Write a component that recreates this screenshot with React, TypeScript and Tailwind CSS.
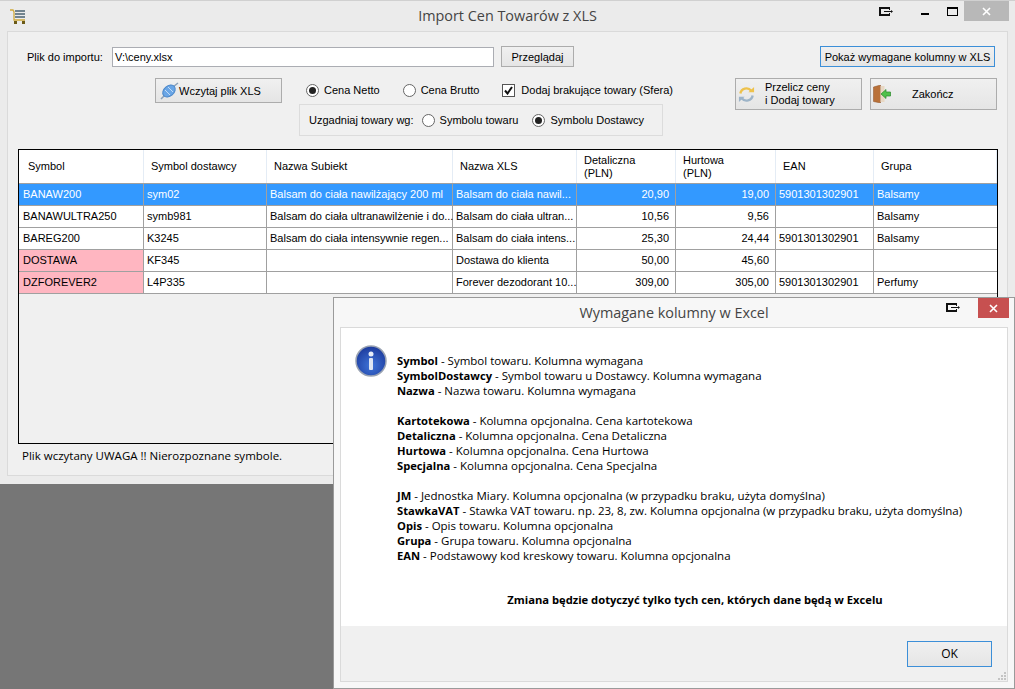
const rows = [
  { symbol: 'BANAW200', dost: 'sym02', subiekt: 'Balsam do ciała nawilżający 200 ml', xls: 'Balsam do ciała nawil...', det: '20,90', hurt: '19,00', ean: '5901301302901', grupa: 'Balsamy', selected: true },
  { symbol: 'BANAWULTRA250', dost: 'symb981', subiekt: 'Balsam do ciała ultranawilżenie i do...', xls: 'Balsam do ciała ultran...', det: '10,56', hurt: '9,56', ean: '', grupa: 'Balsamy' },
  { symbol: 'BAREG200', dost: 'K3245', subiekt: 'Balsam do ciała intensywnie regen...', xls: 'Balsam do ciała intens...', det: '25,30', hurt: '24,44', ean: '5901301302901', grupa: 'Balsamy' },
  { symbol: 'DOSTAWA', dost: 'KF345', subiekt: '', xls: 'Dostawa do klienta', det: '50,00', hurt: '45,60', ean: '', grupa: '', missing: true },
  { symbol: 'DZFOREVER2', dost: 'L4P335', subiekt: '', xls: 'Forever dezodorant 10...', det: '309,00', hurt: '305,00', ean: '5901301302901', grupa: 'Perfumy', missing: true },
]

const cols = 'grid grid-cols-[125px_123px_186px_124px_99px_100px_98px_123px]'

function Radio({ checked, label }: { checked?: boolean; label: string }) {
  return (
    <label className="flex items-center gap-[5px] whitespace-nowrap">
      <span className="w-[13px] h-[13px] rounded-full border border-[#666] bg-white flex items-center justify-center">
        {checked && <span className="w-[7px] h-[7px] rounded-full bg-[#222]" />}
      </span>
      {label}
    </label>
  )
}

function Btn({ className, children }: { className: string; children: React.ReactNode }) {
  return (
    <button className={`border border-[#acacac] bg-gradient-to-b from-[#f0f0f0] to-[#e5e5e5] flex items-center ${className}`}>
      {children}
    </button>
  )
}

function PinIcon() {
  return (
    <svg width="14" height="9" viewBox="0 0 14 9">
      <path d="M0 0h11v3h-1V2H2v5h8V6h1v3H0z" fill="#111" />
      <path d="M5 4h7v1H5z" fill="#111" />
      <path d="M12 3l2 1.500-2 1.500z" fill="#111" />
    </svg>
  )
}

function XlsIcon() {
  return (
    <svg width="20" height="18" viewBox="0 0 20 18">
      <path d="M2 17l4-4M14 5l5-4" stroke="#8aa0b8" strokeWidth="1.500" />
      <ellipse cx="10" cy="9" rx="5" ry="7" transform="rotate(50 10 9)" fill="#6aa6e6" stroke="#4a86c8" />
      <path d="M6 8l5 5M9 5l5 5" stroke="#c3dcf6" />
    </svg>
  )
}

function RefreshIcon() {
  return (
    <svg width="17" height="17" viewBox="0 0 18 18" fill="none" strokeWidth="2.500">
      <path d="M2.500 8a6.500 6.500 0 0 1 11.500-3" stroke="#eec24c" />
      <path d="M11 6.500h6V1z" fill="#eec24c" />
      <path d="M15.500 10a6.500 6.500 0 0 1-11.500 3" stroke="#9db4c8" />
      <path d="M7 11.500H1V17z" fill="#9db4c8" />
    </svg>
  )
}

function DoorIcon() {
  return (
    <svg width="18" height="18" viewBox="0 0 18 18">
      <path d="M0.500 2l7-2v18l-7-1.500z" fill="#b9713a" stroke="#8a4f24" strokeWidth="0.500" />
      <path d="M7.500 1h4v16h-4z" fill="#e8d8c4" />
      <path d="M8 9l5-4.500V7h4.500v4H13v2.500z" fill="#4fc04a" stroke="#2a8a2a" strokeWidth="0.700" />
    </svg>
  )
}

function CartIcon() {
  return (
    <svg width="16" height="15" viewBox="0 0 16 15">
      <path d="M0 1h3l1 2v8h11" fill="none" stroke="#d0aa3c" strokeWidth="1.300" />
      <path d="M5 1h10v2H5zM5 4h10v2H5zM5 7h10v2H5z" fill="#71848f" />
      <rect x="4" y="12" width="3" height="3" fill="#6b5a16" />
      <rect x="12" y="12" width="3" height="3" fill="#6b5a16" />
    </svg>
  )
}

function CloseGlyph() {
  return (
    <svg width="9" height="9" viewBox="0 0 9 9">
      <path d="M1 1l7 7M8 1l-7 7" stroke="#fff" strokeWidth="1.600" />
    </svg>
  )
}

function InfoIcon() {
  return (
    <svg width="32" height="32" viewBox="0 0 32 32" className="shrink-0">
      <defs>
        <radialGradient id="infoBg" cx="50%" cy="65%" r="65%">
          <stop offset="0%" stopColor="#3f74d8" />
          <stop offset="100%" stopColor="#1c3a9c" />
        </radialGradient>
      </defs>
      <circle cx="16" cy="16" r="15" fill="url(#infoBg)" stroke="#9aa3b3" strokeWidth="1.500" />
      <circle cx="16" cy="9" r="2.500" fill="#e8eef8" />
      <rect x="14" y="13" width="4" height="12" rx="1" fill="#dfe6f2" />
    </svg>
  )
}

const dialogLines: [string, string][][] = [
  [
    ['Symbol', ' - Symbol towaru. Kolumna wymagana'],
    ['SymbolDostawcy', ' - Symbol towaru u Dostawcy. Kolumna wymagana'],
    ['Nazwa', ' - Nazwa towaru. Kolumna wymagana'],
  ],
  [
    ['Kartotekowa', ' - Kolumna opcjonalna. Cena kartotekowa'],
    ['Detaliczna', ' - Kolumna opcjonalna. Cena Detaliczna'],
    ['Hurtowa', ' - Kolumna opcjonalna. Cena Hurtowa'],
    ['Specjalna', ' - Kolumna opcjonalna. Cena Specjalna'],
  ],
  [
    ['JM', ' - Jednostka Miary. Kolumna opcjonalna (w przypadku braku, użyta domyślna)'],
    ['StawkaVAT', ' - Stawka VAT towaru. np. 23, 8, zw. Kolumna opcjonalna (w przypadku braku, użyta domyślna)'],
    ['Opis', ' - Opis towaru. Kolumna opcjonalna'],
    ['Grupa', ' - Grupa towaru. Kolumna opcjonalna'],
    ['EAN', ' - Podstawowy kod kreskowy towaru. Kolumna opcjonalna'],
  ],
]

export default function App() {
  return (
    <div className="relative w-[1015px] h-[689px] overflow-hidden bg-[#767676] text-black font-['Liberation_Sans',sans-serif] text-[11px]">
      {/* main window */}
      <div className="h-[484px] bg-[#ebebeb] border-t border-[#d0d0d0] flex flex-col">
        <div className="h-[30px] shrink-0 flex items-center pl-[10px] relative">
          <CartIcon />
          <span className="absolute left-0 right-0 top-[5px] text-center font-['Open_Sans',sans-serif] text-[14.4px] leading-[20px] text-[#444]">Import Cen Towarów z XLS</span>
          <div className="ml-auto mr-[6px] -mt-[10px] flex items-center h-[20px]">
            <span className="mr-[28px] flex"><PinIcon /></span>
            <span className="w-[8px] h-[2px] bg-black mr-[18px] mt-[6px]" />
            <span className="w-[11px] h-[9px] border border-black border-t-2 mr-[6px]" />
            <span className="w-[45px] h-[20px] bg-[#b8b8b8] flex items-center justify-center"><CloseGlyph /></span>
          </div>
        </div>
        <div className="mx-[7px] h-[445px] bg-[#f0f0f0] border border-[#dadada] leading-[14px] px-[11px] relative">
          <div className="flex items-start h-[44px] pt-[15px]">
            <span className="w-[85px] ml-[8px] mt-[3px]">Plik do importu:</span>
            <div className="w-[382px] h-[20px] bg-white border border-[#abadb3] px-[2px] leading-[18px]">V:\ceny.xlsx</div>
            <Btn className="ml-[7px] -mt-[1px] w-[73px] h-[21px] justify-center">Przeglądaj</Btn>
            <Btn className="ml-auto mr-[1px] -mt-[1px] w-[175px] h-[21px] justify-center !border-[#3c8fd8]">Pokaż wymagane kolumny w XLS</Btn>
          </div>
          <div className="flex pt-[2px]">
            <div className="ml-[136px] w-[127px]">
              <Btn className="w-[127px] h-[25px] pl-[3px]">
                <XlsIcon />
                <span>Wczytaj plik XLS</span>
              </Btn>
            </div>
            <div className="ml-[24px] w-[429px] shrink-0">
              <div className="flex items-center h-[24px]">
                <Radio checked label="Cena Netto" />
                <span className="ml-[23px]"><Radio label="Cena Brutto" /></span>
                <label className="ml-[23px] flex items-center gap-[6px] whitespace-nowrap">
                  <span className="w-[13px] h-[13px] border border-[#555] bg-white flex items-center justify-center">
                    <svg width="9" height="9" viewBox="0 0 9 9"><path d="M1 4.500l2.500 3L8 1" fill="none" stroke="#111" strokeWidth="2" /></svg>
                  </span>
                  Dodaj brakujące towary (Sfera)
                </label>
              </div>
              <div className="mt-[2px] -ml-[7px] w-[364px] h-[32px] border border-[#dcdcdc] flex items-center pl-[9px] whitespace-nowrap">
                Uzgadniaj towary wg:
                <span className="ml-[8px]"><Radio label="Symbolu towaru" /></span>
                <span className="ml-[14px]"><Radio checked label="Symbolu Dostawcy" /></span>
              </div>
            </div>
            <div className="flex gap-[8px] shrink-0">
              <Btn className="w-[127px] h-[32px] pl-[2px] text-left">
                <RefreshIcon />
                <span className="ml-[10px] leading-[13px] whitespace-nowrap">Przelicz ceny<br />i Dodaj towary</span>
              </Btn>
              <Btn className="w-[127px] h-[32px] pl-[2px]">
                <DoorIcon />
                <span className="ml-[21px]">Zakończ</span>
              </Btn>
            </div>
          </div>
          {/* grid */}
          <div className="absolute left-[10px] top-[117px] w-[980px] h-[295px] border border-black bg-[#f0f0f0]">
            <div className={`${cols} h-[33px] bg-white`}>
              {['Symbol', 'Symbol dostawcy', 'Nazwa Subiekt', 'Nazwa XLS', 'Detaliczna\n(PLN)', 'Hurtowa\n(PLN)', 'EAN', 'Grupa'].map((h, i) => (
                <div key={h} className={`border-r border-[#e4ecf5] whitespace-pre-line flex items-center leading-[13px] ${i === 0 ? 'pl-[9px]' : 'pl-[7px]'}`}>{h}</div>
              ))}
            </div>
            {rows.map((r) => (
              <div key={r.symbol} className={`${cols} h-[22px] border-t border-[#a0a0a0] leading-[21px] ${r.selected ? 'bg-[#3399ff] text-white' : 'bg-white'}`}>
                <div className={`pl-[4px] border-r border-[#a0a0a0] whitespace-nowrap ${r.missing ? 'bg-[#ffb6c1]' : ''}`}>{r.symbol}</div>
                <div className="pl-[3px] border-r border-[#a0a0a0] whitespace-nowrap">{r.dost}</div>
                <div className="pl-[3px] border-r border-[#a0a0a0] whitespace-nowrap">{r.subiekt}</div>
                <div className="pl-[3px] border-r border-[#a0a0a0] whitespace-nowrap">{r.xls}</div>
                <div className="pr-[6px] border-r border-[#a0a0a0] text-right">{r.det}</div>
                <div className="pr-[6px] border-r border-[#a0a0a0] text-right">{r.hurt}</div>
                <div className="pl-[3px] border-r border-[#a0a0a0]">{r.ean}</div>
                <div className="pl-[3px]">{r.grupa}</div>
              </div>
            ))}
            <div className="h-[1px] bg-[#a0a0a0] w-full" />
          </div>
          <div className="absolute left-[14px] top-[416px] font-['Open_Sans',sans-serif] text-[11.5px] leading-[16px]">Plik wczytany UWAGA !! Nierozpoznane symbole.</div>
        </div>
      </div>

      {/* dialog window */}
      <div className="absolute left-[333px] top-[297px] w-[682px] h-[392px] bg-[#f7f7f7] border border-[#9a9a9a] flex flex-col font-['Open_Sans',sans-serif]">
        <div className="h-[29px] shrink-0 relative">
          <span className="absolute left-0 right-0 top-[5px] text-center text-[14.4px] leading-[20px] text-[#444]">Wymagane kolumny w Excel</span>
          <span className="absolute right-[54px] top-[5px] flex"><PinIcon /></span>
          <span className="absolute right-[5px] top-0 w-[31px] h-[20px] bg-[#c75050] flex items-center justify-center"><CloseGlyph /></span>
        </div>
        <div className="mx-[6px] flex-1 border border-[#dadada] bg-white flex flex-col mb-[6px]">
          <div className="flex-1 pl-[14px] pt-[17px] flex gap-[10px]">
            <InfoIcon />
            <div className="pt-[8px] text-[11.5px] leading-[15px] flex-1">
              {dialogLines.map((group, i) => (
                <div key={i} className="mb-[15px]">
                  {group.map(([name, rest]) => (
                    <div key={name} className="whitespace-nowrap"><b className="text-[11.2px]">{name}</b>{rest}</div>
                  ))}
                </div>
              ))}
              <div className="mt-[29px] font-bold text-[11.2px] text-center pr-[14px]">Zmiana będzie dotyczyć tylko tych cen, których dane będą w Excelu</div>
            </div>
          </div>
          <div className="h-[55px] shrink-0 bg-[#f0f0f0] flex items-center justify-end pr-[15px] relative">
            <Btn className="w-[85px] h-[26px] justify-center !border-[#3c8fd8] text-[12px]">OK</Btn>
            <svg width="9" height="9" viewBox="0 0 9 9" className="absolute right-[1px] bottom-[1px]">
              <path d="M7 1h2v2H7zM4 4h2v2H4zM7 4h2v2H7zM1 7h2v2H1zM4 7h2v2H4zM7 7h2v2H7z" fill="#c4c4c4" />
            </svg>
          </div>
        </div>
      </div>
    </div>
  )
}
